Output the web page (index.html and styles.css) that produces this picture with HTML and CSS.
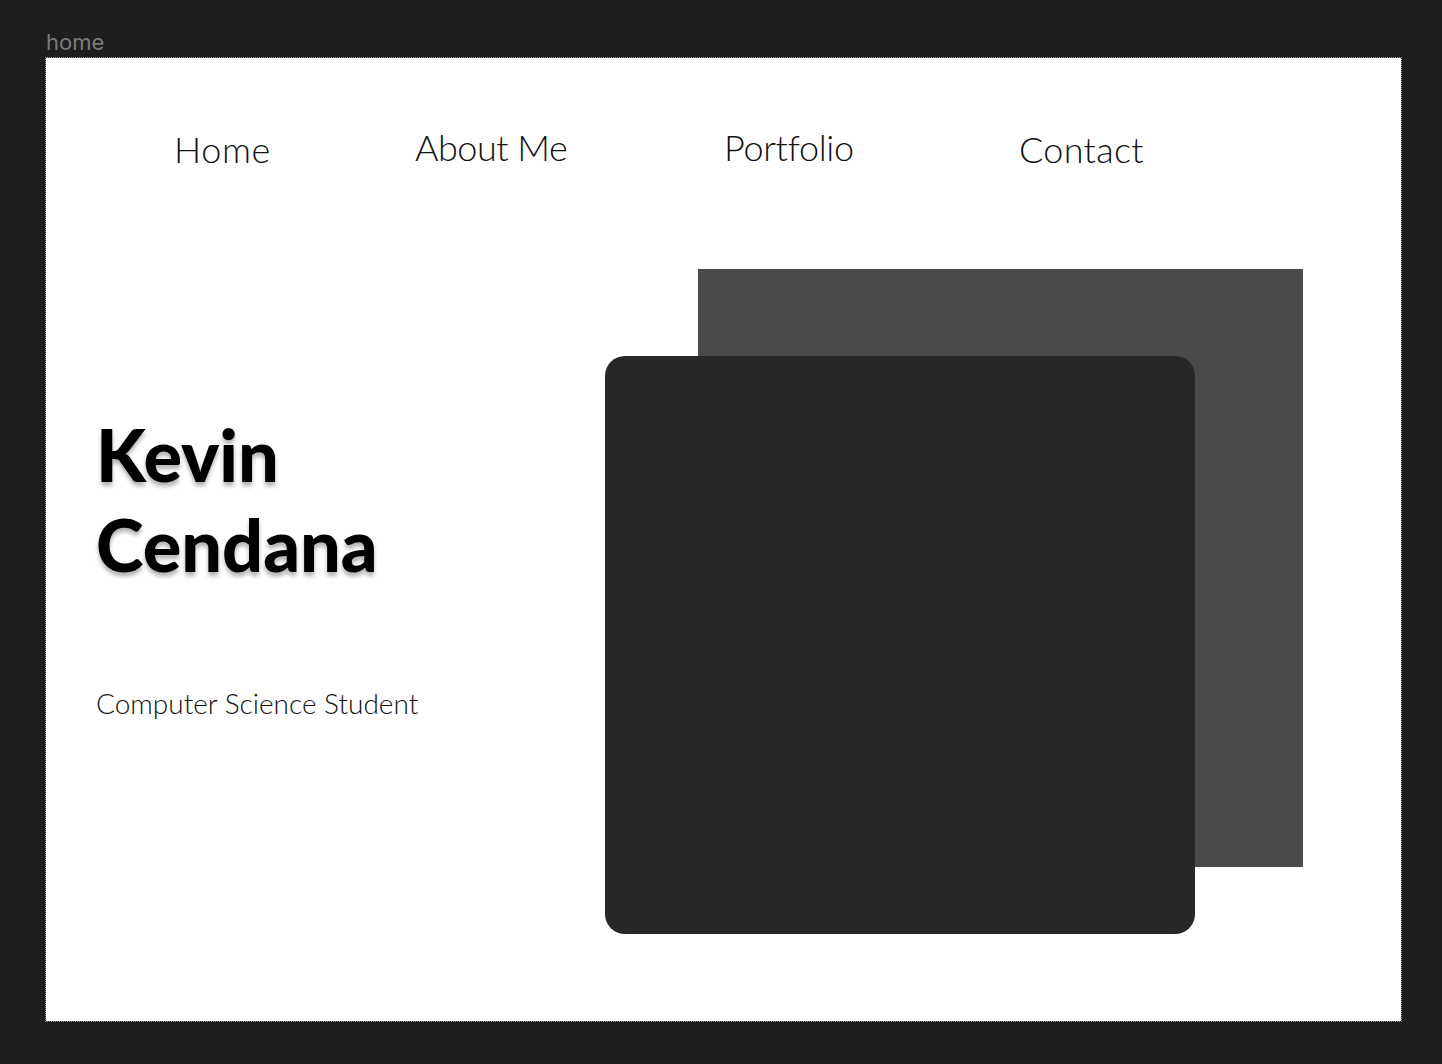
FILE: index.html
```html
<!DOCTYPE html>
<html>
<head>
<meta charset="utf-8">
<link rel="stylesheet" href="styles.css">
</head>
<body>
<div class="canvas">
  <div class="frame-label">home</div>
  <div class="frame">
    <nav class="nav">
      <a class="nav-item nav-home">Home</a>
      <a class="nav-item nav-about">About Me</a>
      <a class="nav-item nav-portfolio">Portfolio</a>
      <a class="nav-item nav-contact">Contact</a>
    </nav>
    <main class="hero">
      <section class="intro">
        <h1 class="name">Kevin<br>Cendana</h1>
        <p class="role">Computer Science Student</p>
      </section>
      <section class="art">
        <div class="square-back"></div>
        <div class="square-front"></div>
      </section>
    </main>
  </div>
</div>
</body>
</html>
```
FILE: styles.css
```css
* { box-sizing: border-box; }
html, body {
  margin: 0;
  padding: 0;
  background: #1e1e1e;
}
.canvas {
  width: 1442px;
  height: 1064px;
  padding: 28px 0 0 46px;
  display: flex;
  flex-direction: column;
}
.frame-label {
  font-family: "Inter", "Noto Sans", sans-serif;
  font-size: 22px;
  line-height: 28px;
  color: #7b7b7b;
  height: 30px;
}
.frame {
  width: 1355px;
  height: 963px;
  background: #fff;
  outline: 1px dotted #9a9a9a;
  display: flex;
  flex-direction: column;
}
.nav {
  display: flex;
  align-items: flex-start;
  padding: 65px 0 0 128px;
  height: 211px;
}
.nav-item {
  font-family: "Lato", sans-serif;
  font-weight: 300;
  font-size: 36px;
  line-height: 48px;
  color: #111;
  text-decoration: none;
  white-space: nowrap;
}
.nav-home { width: 241px; margin-top: 2px; letter-spacing: 0.6px; }
.nav-about { width: 309px; letter-spacing: -0.5px; }
.nav-portfolio { width: 295px; letter-spacing: -0.3px; }
.nav-contact { margin-top: 2px; letter-spacing: 0.3px; }
.hero {
  display: flex;
  align-items: flex-start;
}
.intro {
  width: 559px;
  padding: 140px 0 0 50px;
}
.name {
  margin: 0;
  font-family: "Lato", sans-serif;
  font-weight: 900;
  font-size: 72px;
  line-height: 90px;
  color: #000;
  text-shadow: 0 4px 4px rgba(0, 0, 0, 0.3);
}
.role {
  margin: 96px 0 0;
  font-family: "Lato", sans-serif;
  font-weight: 300;
  font-size: 28px;
  line-height: 36px;
  color: #111;
}
.art {
  display: grid;
  width: 698px;
  height: 665px;
}
.square-back,
.square-front {
  grid-area: 1 / 1;
}
.square-back {
  margin-left: 93px;
  width: 605px;
  height: 598px;
  background: #4a4a4a;
}
.square-front {
  margin-top: 87px;
  width: 590px;
  height: 578px;
  background: #272727;
  border-radius: 20px;
}
```
